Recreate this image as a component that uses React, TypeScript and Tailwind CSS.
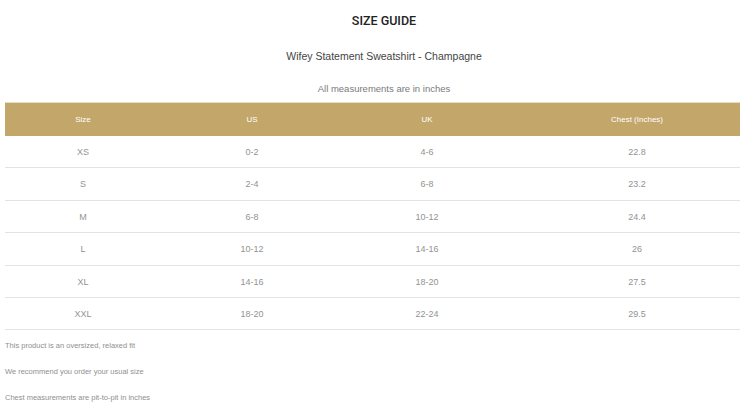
export default function App() {
  const rows = [
    { size: "XS", us: "0-2", uk: "4-6", chest: "22.8" },
    { size: "S", us: "2-4", uk: "6-8", chest: "23.2" },
    { size: "M", us: "6-8", uk: "10-12", chest: "24.4" },
    { size: "L", us: "10-12", uk: "14-16", chest: "26" },
    { size: "XL", us: "14-16", uk: "18-20", chest: "27.5" },
    { size: "XXL", us: "18-20", uk: "22-24", chest: "29.5" },
  ];

  const notes = [
    "This product is an oversized, relaxed fit",
    "We recommend you order your usual size",
    "Chest measurements are pit-to-pit in inches",
  ];

  const cols = "grid grid-cols-[156px_182px_168px_252px]";

  return (
    <div className="w-[740px] h-[406px] overflow-hidden bg-white font-['Liberation_Sans',Arial,sans-serif]">
      <div className="ml-[5px] w-[758px] pt-[14px] text-center">
        <h1 className="font-['Roboto',Arial,sans-serif] text-[12.5px] leading-[14px] font-medium text-[#222]">
          SIZE GUIDE
        </h1>
        <p className="mt-[22px] text-[10.5px] leading-[13px] text-[#444]">
          Wifey Statement Sweatshirt - Champagne
        </p>
        <p className="mt-[20px] text-[9.5px] leading-[12px] text-[#7a7a7a]">
          All measurements are in inches
        </p>
      </div>

      <div className="ml-[5px] mt-[7px] w-[758px]">
        <div className={`${cols} h-[34px] items-center border-t border-[#e6ddc9] bg-[#c3a66a] pt-[1px] text-[8px] text-white`}>
          <div className="text-center">Size</div>
          <div className="text-center">US</div>
          <div className="text-center">UK</div>
          <div className="text-center">Chest (Inches)</div>
        </div>
        {rows.map((r) => (
          <div
            key={r.size}
            className={`${cols} h-[32.4px] items-center border-b border-[#e3e3e3] pt-[2px] text-[9px] text-[#939393]`}
          >
            <div className="text-center">{r.size}</div>
            <div className="text-center">{r.us}</div>
            <div className="text-center">{r.uk}</div>
            <div className="text-center">{r.chest}</div>
          </div>
        ))}
      </div>

      <div className="ml-[5px] mt-[11px] flex flex-col gap-[16px] text-[7.5px] leading-[10px] text-[#8f8f8f]">
        {notes.map((n) => (
          <p key={n}>{n}</p>
        ))}
      </div>
    </div>
  );
}
